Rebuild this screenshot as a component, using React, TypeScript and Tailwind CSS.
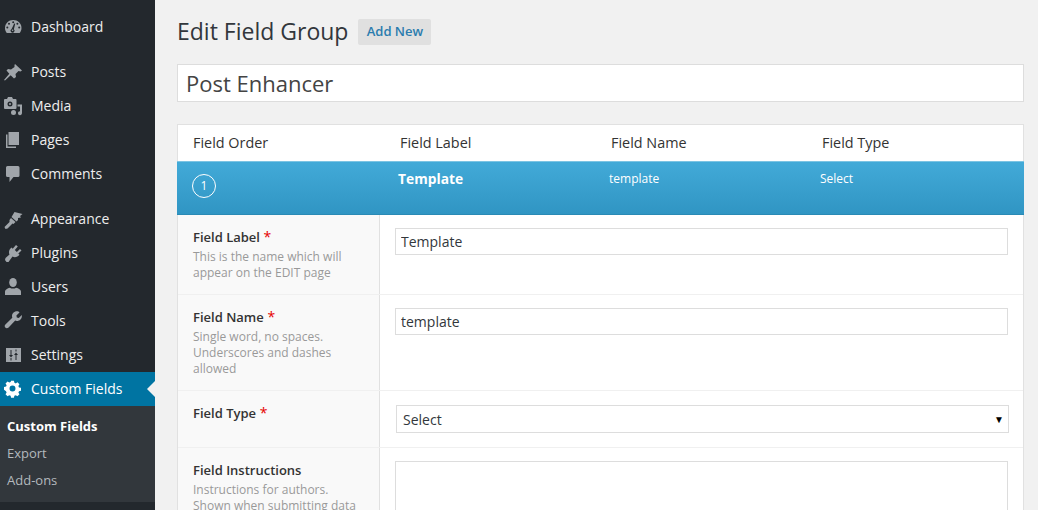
import React from "react";

const DARK = "#23282d";
const P = ({ children, c = "#a0a5aa" }: { children: React.ReactNode; c?: string }) => (
  <svg width="20" height="20" viewBox="0 0 20 20" fill={c} className="shrink-0">{children}</svg>
);

const icons: Record<string, React.ReactNode> = {
  dashboard: (
    <>
      <path d="M10.200 3C5.700 3 2 6.500 2 11c0 2 .7 3.700 1.800 5h12.800c1.100-1.300 1.900-3 1.900-5 0-4.500-3.800-8-8.300-8z" />
      <g fill={DARK}>
        <circle cx="10.200" cy="5.200" r="1" />
        <circle cx="6" cy="6.700" r="1" />
        <circle cx="14.400" cy="6.700" r="1" />
        <circle cx="4.300" cy="10.500" r="1" />
        <circle cx="16.200" cy="10.500" r="1" />
        <path d="M11.200 6.500l1 .3-1.300 5.400a2 2 0 1 1-2.300-.3z" />
      </g>
      <circle cx="9.600" cy="13.300" r=".8" />
    </>
  ),
  posts: <path d="M12 2l7 6.500-1.500 1-2-.5-3 3 .5 3L11 16.500l-3.300-3.300L2 18.500 1 18l5.300-6.200L3.500 8.500 5 7l3 .5L11.500 5v-2z" />,
  media: (
    <>
      <path
        fillRule="evenodd"
        d="M5 1h4l1 2h2.500a1 1 0 0 1 1 1v8a1 1 0 0 1-1 1H2a1 1 0 0 1-1-1V4a1 1 0 0 1 1-1h2zM7 5.500a2.500 2.500 0 1 0 0 5 2.500 2.500 0 0 0 0-5z"
      />
      <circle cx="7" cy="8" r="1" />
      <path d="M14.500 8.500H19v9h-.1a2 2 0 1 1-1.900-2.300V10.500h-2.500z" />
      <circle cx="10.500" cy="16.500" r="2.500" />
    </>
  ),
  pages: (
    <>
      <path d="M5.500 2H16v13H5.500z" />
      <path d="M3 4.500h1.500V16.500H13V18H3z" />
    </>
  ),
  comments: <path d="M4.500 2h10.500a1.500 1.500 0 0 1 1.500 1.500v8a1.500 1.500 0 0 1-1.500 1.500h-4.500L6.500 18v-5h-2A1.500 1.500 0 0 1 3 11.500v-8A1.500 1.500 0 0 1 4.500 2z" />,
  appearance: (
    <>
      <path d="M11.500 3l8 2-2.500 2 1 1.500-3 .5v2l-1.500 1.500-5-4.500z" />
      <path d="M8 9l4.500 4-2 2-1-.5-5 5-2 .5-1-2 5-5v-2z" />
    </>
  ),
  plugins: <path d="M13 2l1.800 1.500-3 3.500 2 2 3.200-3 1.500 1.600-3.200 3 1.200 1.200-1 1c-1.500 1.500-4 2-6 .8l-4 5.400H3.500L2 17l.5-2 4-3.500c-1-2-.5-4.500 1-6l1-1 1.200 1.200z" />,
  users: (
    <>
      <ellipse cx="10" cy="5.500" rx="3.800" ry="4.500" />
      <path d="M2 18v-3.500c0-1.700 2.500-3.300 4.800-3.800 2 1.200 4.400 1.200 6.400 0 2.300.5 4.800 2.100 4.800 3.800V18z" />
    </>
  ),
  tools: <path d="M16.500 1.500l-3.100 3.100.4 2 2 .4 3-3c.5 3-1.600 5.900-5 5.900-.6 0-1.100-.1-1.600-.3l-6.600 6.900c-1 1-2.500 1-3.300.1-.9-.9-.8-2.300.1-3.200l6.900-6.700c-.2-.5-.3-1-.3-1.600 0-3.300 3.400-5.300 6.500-4.600z" />,
  settings: (
    <>
      <path d="M3 3h15v14H3z" />
      <g fill={DARK}>
        <path d="M7.500 5h1v5h1.500L8 12.500 6 10h1.500zM7.500 13h1v2.500h-1z" />
        <path d="M12.500 15h1v-5H15l-2-2.500L11 10h1.500zM12.500 4.500h1v2h-1z" />
      </g>
    </>
  ),
};

const Gear = () => (
  <P c="#fff">
    <path
      fillRule="evenodd"
      d="M8.300 1.500h3.400l.5 2.400c.6.200 1.100.4 1.600.7l2-1.300 2.400 2.400-1.300 2c.3.500.5 1.100.7 1.600l2.400.5v3.400l-2.400.5c-.2.600-.4 1.100-.7 1.600l1.300 2-2.400 2.400-2-1.300c-.5.300-1.100.5-1.600.7l-.5 2.400H8.300l-.5-2.400c-.6-.2-1.100-.4-1.600-.7l-2 1.300-2.400-2.400 1.300-2c-.3-.5-.5-1.100-.7-1.600L0 12.200V8.800l2.400-.5c.2-.6.4-1.100.7-1.600l-1.300-2 2.400-2.400 2 1.300c.5-.3 1.100-.5 1.600-.7zM10 7a3.500 3.500 0 1 0 0 7 3.500 3.500 0 0 0 0-7z"
      transform="translate(1 .5) scale(.85)"
    />
  </P>
);

const Item = ({ icon, label, mt }: { icon: string; label: string; mt?: boolean }) => (
  <div className={`flex h-[34px] items-center pl-[3px] gap-[8px] text-[14px] text-[#eeeeee] ${mt ? "mt-[11px]" : ""}`}>
    <P>{icons[icon]}</P>
    <span className="-mt-[2px]">{label}</span>
  </div>
);

const Cols = ["Field Order", "Field Label", "Field Name", "Field Type"];

const Row = ({
  label,
  req,
  help,
  h,
  children,
}: {
  label: string;
  req?: boolean;
  help?: string[];
  h: string;
  children: React.ReactNode;
}) => (
  <div className={`flex border-b border-[#f0f0f0] ${h}`}>
    <div className="w-[202px] shrink-0 bg-[#f9f9f9] border-r border-[#e1e1e1] pl-[15px] pt-[12px]">
      <div className="text-[13px] leading-[20px] font-semibold text-[#333]">
        {label}
        {req && <span className="text-[#e60000] font-normal text-[14px] leading-[14px]"> *</span>}
      </div>
      {help && (
        <div className="text-[12px] leading-[16px] text-[#999999] mt-[2px]">
          {help.map((t) => (
            <div key={t}>{t}</div>
          ))}
        </div>
      )}
    </div>
    <div className="flex-1 min-w-0 pl-[15px] pr-[15px]">{children}</div>
  </div>
);

export default function App() {
  return (
    <div className="flex h-[510px] w-[1038px] overflow-hidden bg-[#f1f1f1] font-['Open_Sans',sans-serif]">
      <aside className="w-[155px] shrink-0 bg-[#23282d] pt-[10px]">
        <Item icon="dashboard" label="Dashboard" />
        <Item icon="posts" label="Posts" mt />
        <Item icon="media" label="Media" />
        <Item icon="pages" label="Pages" />
        <Item icon="comments" label="Comments" />
        <Item icon="appearance" label="Appearance" mt />
        <Item icon="plugins" label="Plugins" />
        <Item icon="users" label="Users" />
        <Item icon="tools" label="Tools" />
        <Item icon="settings" label="Settings" />
        <div className="relative flex h-[34px] items-center pl-[3px] gap-[8px] bg-[#0074a2] text-[14px] text-white">
          <Gear />
          <span className="-mt-[2px]">Custom Fields</span>
          <span className="absolute right-0 top-[9px] border-y-[8px] border-r-[8px] border-y-transparent border-r-[#f1f1f1]" />
        </div>
        <div className="bg-[#32373c] h-[96px] pt-[7px] pl-[7px] text-[13px]">
          <div className="h-[27px] leading-[27px] font-bold text-white">Custom Fields</div>
          <div className="h-[27px] leading-[27px] text-[#b4b9be]">Export</div>
          <div className="h-[27px] leading-[27px] text-[#b4b9be]">Add-ons</div>
        </div>
      </aside>

      <main className="flex-1 min-w-0 pl-[22px] pr-[14px]">
        <div className="flex items-center h-[64px] pb-[1px]">
          <h1 className="text-[23px] leading-[29px] text-[#32373c]">Edit Field Group</h1>
          <span className="ml-[10px] flex h-[26px] w-[73px] items-center justify-center rounded-[2px] bg-[#e0e0e0] text-[13px] font-semibold text-[#2a7cae]">
            Add New
          </span>
        </div>

        <input
          readOnly
          value="Post Enhancer"
          className="block h-[38px] w-full border border-[#dddddd] bg-white px-[8px] text-[22px] text-[#444444] outline-none"
        />

        <div className="mt-[22px] border-x border-t border-[#e1e1e1] bg-white">
          <div className="flex h-[36px] items-start pt-[8px] pl-[15px] text-[14.400px] leading-[20px] font-medium text-[#333]">
            <span className="w-[207px]">{Cols[0]}</span>
            <span className="w-[211px]">{Cols[1]}</span>
            <span className="w-[211px]">{Cols[2]}</span>
            <span>{Cols[3]}</span>
          </div>
          <div className="-mx-px flex h-[54px] border-t border-[#7cc4e3] border-b border-b-[#2a8ab5] bg-gradient-to-b from-[#42aad8] to-[#3095c3] text-white">
            <div className="w-[221px] pl-[15px] pt-[12px]">
              <span className="flex h-[24px] w-[24px] items-center justify-center rounded-full border border-white text-[12px]">1</span>
            </div>
            <span className="w-[211px] pt-[7px] text-[13.800px] leading-[20px] font-bold">Template</span>
            <span className="w-[211px] pt-[8px] text-[12px] leading-[18px]">template</span>
            <span className="pt-[8px] text-[12px] leading-[18px]">Select</span>
          </div>

          <Row label="Field Label" req h="h-[80px]" help={["This is the name which will", "appear on the EDIT page"]}>
            <input
              readOnly
              value="Template"
              className="mt-[13px] block h-[27px] w-full border border-[#dddddd] bg-white px-[5px] text-[14px] text-[#32373c] outline-none"
            />
          </Row>
          <Row label="Field Name" req h="h-[96px]" help={["Single word, no spaces.", "Underscores and dashes", "allowed"]}>
            <input
              readOnly
              value="template"
              className="mt-[13px] block h-[27px] w-full border border-[#dddddd] bg-white px-[5px] text-[14px] text-[#32373c] outline-none"
            />
          </Row>
          <Row label="Field Type" req h="h-[57px]">
            <div className="relative ml-px mr-[-1px] mt-[14px]">
              <select className="block h-[28px] w-full appearance-none rounded-none border border-[#dddddd] bg-white px-[6px] text-[14px] text-[#32373c] outline-none">
                <option>Select</option>
              </select>
              <span className="absolute right-[5px] top-[7px] text-[10px] leading-[14px] text-black">▼</span>
            </div>
          </Row>
          <Row label="Field Instructions" h="h-[120px]" help={["Instructions for authors.", "Shown when submitting data"]}>
            <textarea
              readOnly
              className="mt-[13px] block h-[90px] w-full resize-none border border-[#dddddd] bg-white outline-none"
            />
          </Row>
        </div>
      </main>
    </div>
  );
}
